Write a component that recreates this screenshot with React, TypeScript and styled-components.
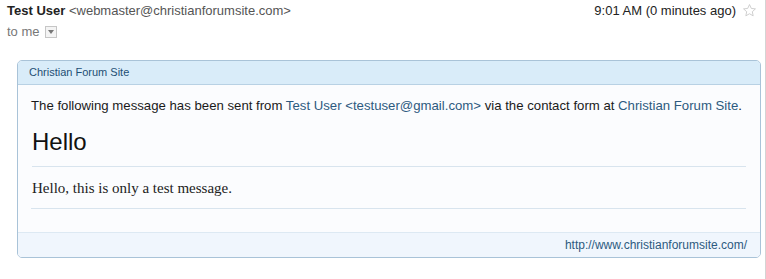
import React from "react";
import styled, { createGlobalStyle } from "styled-components";

const GlobalStyle = createGlobalStyle`
  html, body {
    margin: 0;
    padding: 0;
    background: #ffffff;
  }
  body {
    font-family: "Liberation Sans", Arial, sans-serif;
  }
`;

const Page = styled.div`
  width: 766px;
  height: 279px;
  overflow: hidden;
  box-sizing: border-box;
  border-right: 1px solid #d4d4d4;
`;

const MailHead = styled.div`
  display: flex;
  justify-content: space-between;
  align-items: flex-start;
  padding: 3px 8px 0 7px;
  font-size: 13px;
  color: #222;
`;

const Sender = styled.div`
  display: flex;
  flex-direction: column;
  gap: 6px;
`;

const Name = styled.span`
  font-weight: bold;
  color: #222;
`;

const Address = styled.span`
  color: #555;
`;

const ToLine = styled.div`
  display: flex;
  align-items: center;
  gap: 5px;
  color: #777;
`;

const DropBox = styled.span`
  display: inline-flex;
  align-items: center;
  justify-content: center;
  width: 10px;
  height: 10px;
  border: 1px solid #c6c6c6;
  background: #f4f4f4;
`;

const Meta = styled.div`
  display: flex;
  align-items: center;
  gap: 6px;
  color: #222;
`;

const Frame = styled.div`
  margin: 21px 4px 0 17px;
  border: 1px solid #a9c3d8;
  border-radius: 5px;
  background: #fbfcfe;
  overflow: hidden;
  font-family: "Liberation Sans", "DejaVu Sans", sans-serif;
`;

const FrameTitle = styled.div`
  height: 23px;
  line-height: 23px;
  padding-left: 11px;
  font-size: 11px;
  color: #1e4f74;
  background: #d9ecf9;
  border-bottom: 1px solid #b8d1e4;
`;

const FrameBody = styled.div`
  padding: 13px 14px 0 13px;
`;

const Intro = styled.p`
  margin: 0;
  font-size: 13.2px;
  color: #1a1a1a;
`;

const Link = styled.span`
  color: #2d5a7f;
`;

const Heading = styled.h2`
  margin: 15px 0 0 1px;
  font-size: 24px;
  font-weight: normal;
  color: #111;
  padding-bottom: 10px;
  border-bottom: 1px solid #d8e4ee;
`;

const Message = styled.p`
  margin: 0;
  padding: 13px 0 11px 1px;
  font-family: "Liberation Serif", "DejaVu Serif", serif;
  font-size: 15px;
  color: #222;
  border-bottom: 1px solid #d8e4ee;
`;

const FrameFoot = styled.div`
  margin-top: 23px;
  height: 24px;
  line-height: 24px;
  padding-right: 13px;
  text-align: right;
  font-size: 12px;
  color: #2d5a7f;
  background: #f0f6fd;
  border-top: 1px solid #dde9f3;
`;

const Star = () => (
  <svg width="15" height="15" viewBox="0 0 24 24">
    <path
      d="M12 2.5l2.9 6.2 6.6.7-5 4.5 1.4 6.6L12 17.2l-5.9 3.3 1.4-6.6-5-4.5 6.6-.7z"
      fill="none"
      stroke="#c8c8c8"
      strokeWidth="1.4"
      strokeLinejoin="round"
    />
  </svg>
);

export default function App() {
  return (
    <Page>
      <GlobalStyle />
      <MailHead>
        <Sender>
          <div>
            <Name>Test User</Name> <Address>&lt;webmaster@christianforumsite.com&gt;</Address>
          </div>
          <ToLine>
            to me
            <DropBox>
              <svg width="6" height="4" viewBox="0 0 6 4">
                <path d="M0 0h6L3 4z" fill="#777" />
              </svg>
            </DropBox>
          </ToLine>
        </Sender>
        <Meta>
          <span>9:01 AM (0 minutes ago)</span>
          <Star />
        </Meta>
      </MailHead>
      <Frame>
        <FrameTitle>Christian Forum Site</FrameTitle>
        <FrameBody>
          <Intro>
            The following message has been sent from <Link>Test User &lt;testuser@gmail.com&gt;</Link> via the
            contact form at <Link>Christian Forum Site</Link>.
          </Intro>
          <Heading>Hello</Heading>
          <Message>Hello, this is only a test message.</Message>
        </FrameBody>
        <FrameFoot>http://www.christianforumsite.com/</FrameFoot>
      </Frame>
    </Page>
  );
}
